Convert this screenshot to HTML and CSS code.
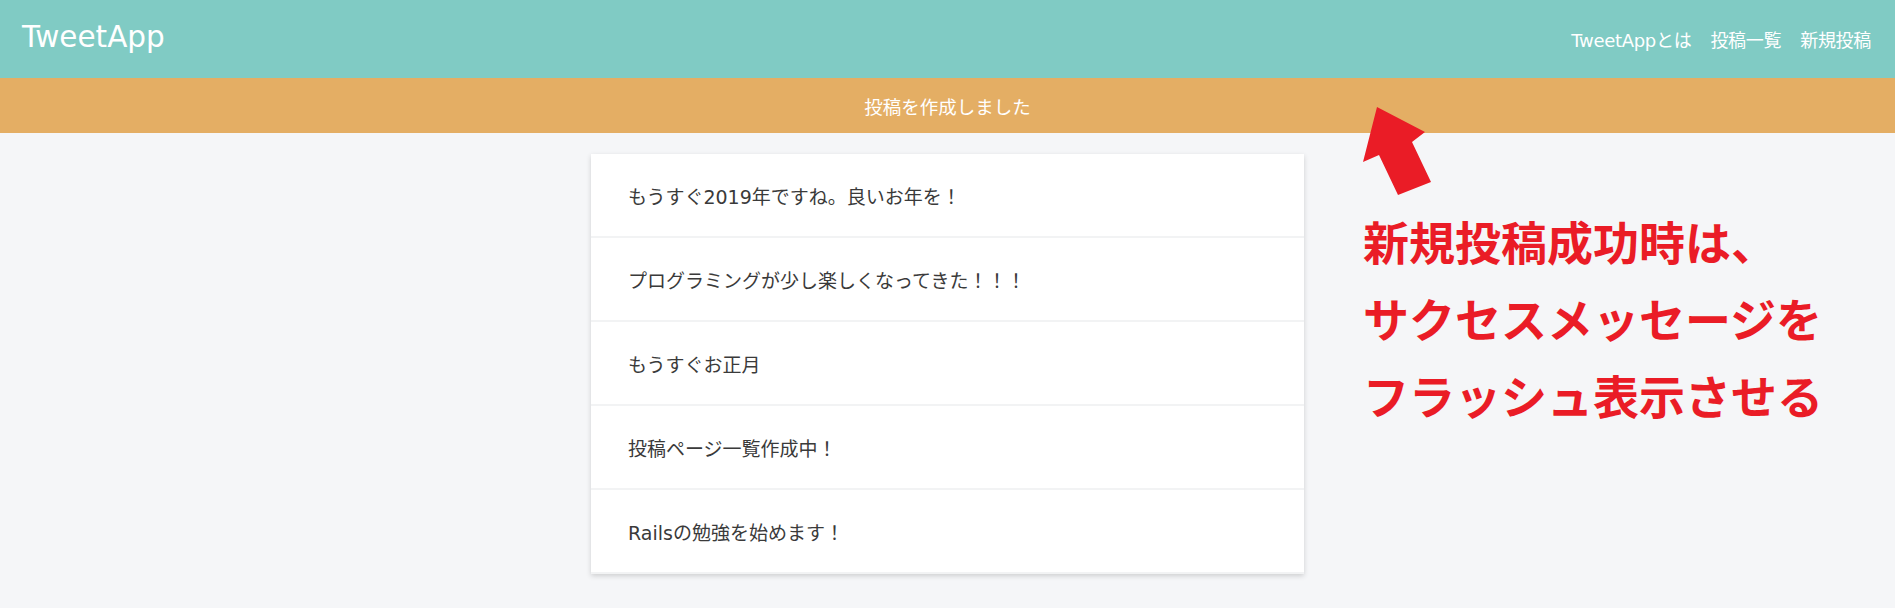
FILE: index.html
```html
<!DOCTYPE html>
<html lang="ja">
<head>
<meta charset="utf-8">
<title>TweetApp</title>
<link rel="stylesheet" href="styles.css">
</head>
<body>
<header class="header">
  <a class="logo" href="#">TweetApp</a>
  <nav class="nav">
    <a href="#">TweetAppとは</a>
    <a href="#">投稿一覧</a>
    <a href="#">新規投稿</a>
  </nav>
</header>
<div class="flash">投稿を作成しました</div>
<main class="main">
  <div class="posts">
    <div class="post">もうすぐ2019年ですね。良いお年を！</div>
    <div class="post">プログラミングが少し楽しくなってきた！！！</div>
    <div class="post">もうすぐお正月</div>
    <div class="post">投稿ページ一覧作成中！</div>
    <div class="post">Railsの勉強を始めます！</div>
  </div>
</main>
<svg class="arrow" width="90" height="100" viewBox="0 0 90 100">
  <polygon points="22,7 70,32 57,42 76,82 43,95 24,55 8,62" fill="#ea1c26"/>
</svg>
<div class="note">
  <div>新規投稿成功時は、</div>
  <div>サクセスメッセージを</div>
  <div>フラッシュ表示させる</div>
</div>
</body>
</html>
```
FILE: styles.css
```css
html, body {
  margin: 0;
  padding: 0;
}
body {
  background: #f5f6f8;
  font-family: "DejaVu Sans", "Noto Sans CJK JP", sans-serif;
  color: #333;
  height: 608px;
  overflow: hidden;
}
a {
  color: inherit;
  text-decoration: none;
}
.header {
  height: 78px;
  background: #80cbc4;
  display: flex;
  align-items: center;
  justify-content: space-between;
  padding: 0 24px 0 22px;
  color: #fff;
}
.logo {
  font-size: 29.5px;
  line-height: 1;
  margin-top: -3px;
}
.nav {
  display: flex;
  gap: 19px;
  font-size: 18px;
  letter-spacing: -0.3px;
}
.flash {
  height: 55px;
  background: #e4ae64;
  color: #fff;
  font-size: 18.5px;
  display: flex;
  align-items: center;
  justify-content: center;
}
.main {
  padding-top: 21px;
}
.posts {
  width: 713px;
  margin: 0 auto;
  background: #fff;
  box-shadow: 0 2px 5px rgba(0, 0, 0, 0.16);
}
.post {
  height: 82px;
  border-bottom: 2px solid #f2f3f4;
  display: flex;
  align-items: center;
  padding-left: 37px;
  font-size: 19px;
  color: #3a3a3a;
}
.arrow {
  position: absolute;
  left: 1355px;
  top: 100px;
}
.note {
  position: absolute;
  left: 1363px;
  top: 202px;
  font-family: "Noto Sans CJK JP", sans-serif;
  font-weight: 700;
  font-size: 46px;
  line-height: 77px;
  color: #ea1c26;
}
```
